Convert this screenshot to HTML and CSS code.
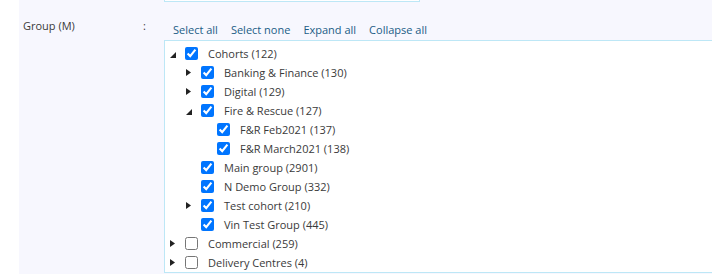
FILE: index.html
```html
<!DOCTYPE html>
<html>
<head>
<meta charset="utf-8">
<link rel="stylesheet" href="styles.css">
</head>
<body>
<div class="form">
  <div class="label-col">
    <span class="label">Group (M)</span>
    <span class="colon">:</span>
  </div>
  <div class="field-col">
    <div class="prev-input"></div>
    <div class="links">
      <a class="link">Select all</a>
      <a class="link">Select none</a>
      <a class="link">Expand all</a>
      <a class="link">Collapse all</a>
    </div>
    <div class="tree">
      <div class="row l0"><span class="tog"><svg class="exp" width="6" height="6" viewBox="0 0 6 6"><polygon points="6,0 6,6 0,6"/></svg></span><input type="checkbox" checked><span class="txt">Cohorts (122)</span></div>
      <div class="row l1"><span class="tog"><svg class="col" width="5" height="7" viewBox="0 0 5 7"><polygon points="0,0 5,3.5 0,7"/></svg></span><input type="checkbox" checked><span class="txt">Banking &amp; Finance (130)</span></div>
      <div class="row l1"><span class="tog"><svg class="col" width="5" height="7" viewBox="0 0 5 7"><polygon points="0,0 5,3.5 0,7"/></svg></span><input type="checkbox" checked><span class="txt">Digital (129)</span></div>
      <div class="row l1"><span class="tog"><svg class="exp" width="6" height="6" viewBox="0 0 6 6"><polygon points="6,0 6,6 0,6"/></svg></span><input type="checkbox" checked><span class="txt">Fire &amp; Rescue (127)</span></div>
      <div class="row l2"><span class="tog"></span><input type="checkbox" checked><span class="txt">F&amp;R Feb2021 (137)</span></div>
      <div class="row l2"><span class="tog"></span><input type="checkbox" checked><span class="txt">F&amp;R March2021 (138)</span></div>
      <div class="row l1"><span class="tog"></span><input type="checkbox" checked><span class="txt">Main group (2901)</span></div>
      <div class="row l1"><span class="tog"></span><input type="checkbox" checked><span class="txt">N Demo Group (332)</span></div>
      <div class="row l1"><span class="tog"><svg class="col" width="5" height="7" viewBox="0 0 5 7"><polygon points="0,0 5,3.5 0,7"/></svg></span><input type="checkbox" checked><span class="txt">Test cohort (210)</span></div>
      <div class="row l1"><span class="tog"></span><input type="checkbox" checked><span class="txt">Vin Test Group (445)</span></div>
      <div class="row l0"><span class="tog"><svg class="col" width="5" height="7" viewBox="0 0 5 7"><polygon points="0,0 5,3.5 0,7"/></svg></span><input type="checkbox"><span class="txt">Commercial (259)</span></div>
      <div class="row l0"><span class="tog"><svg class="col" width="5" height="7" viewBox="0 0 5 7"><polygon points="0,0 5,3.5 0,7"/></svg></span><input type="checkbox"><span class="txt">Delivery Centres (4)</span></div>
    </div>
  </div>
</div>
</body>
</html>
```
FILE: styles.css
```css
html, body {
  margin: 0;
  padding: 0;
  overflow: hidden;
  background: #ffffff;
}
body {
  font-family: "Open Sans", "Noto Sans", sans-serif;
  font-size: 11px;
  color: #3a3a3a;
}
.form {
  margin-left: 19px;
  background: #f7f7fe;
  height: 274px;
  display: grid;
  grid-template-columns: 145px 1fr;
}
.label-col {
  display: flex;
  justify-content: space-between;
  align-items: flex-start;
  padding: 18px 18px 0 4px;
  line-height: 16px;
}
.field-col {
  display: flex;
  flex-direction: column;
  min-width: 0;
}
.prev-input {
  width: 254px;
  height: 1px;
  background: #ffffff;
  border: 1px solid #bde7f6;
  border-top: none;
}
.links {
  display: flex;
  gap: 13px;
  padding: 20px 0 0 9px;
  height: 18px;
  line-height: 16px;
}
.link {
  color: #215d86;
  cursor: pointer;
}
.tree {
  background: #ffffff;
  border: 1px solid #bde7f6;
  margin-right: -20px;
  padding-top: 3px;
}
.row {
  display: flex;
  align-items: center;
  height: 19px;
  white-space: nowrap;
}
.l1 { padding-left: 16px; }
.l2 { padding-left: 32px; }
.tog {
  width: 20px;
  height: 19px;
  display: flex;
  align-items: center;
  padding-left: 5px;
  box-sizing: border-box;
}
.tog svg { fill: #222222; display: block; }
.tog .exp { margin-top: 3px; }
.row input {
  width: 13px;
  height: 13px;
  margin: 0;
}
.txt {
  margin-left: 10px;
}
```
